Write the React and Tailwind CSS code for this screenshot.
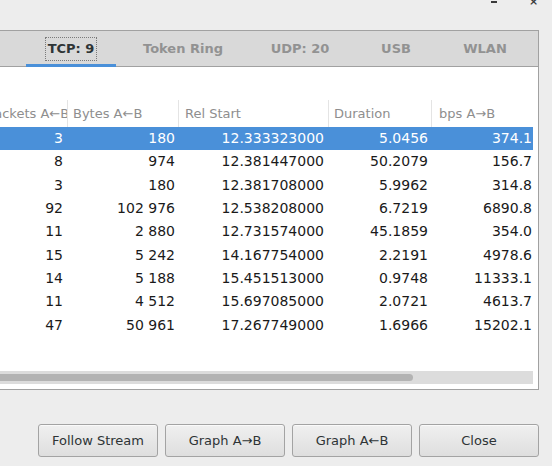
import React from "react";

const rows = [
  ["3", "180", "12.333323000", "5.0456", "374.1"],
  ["8", "974", "12.381447000", "50.2079", "156.7"],
  ["3", "180", "12.381708000", "5.9962", "314.8"],
  ["92", "102\u00a0976", "12.538208000", "6.7219", "6890.8"],
  ["11", "2\u00a0880", "12.731574000", "45.1859", "354.0"],
  ["15", "5\u00a0242", "14.167754000", "2.2191", "4978.6"],
  ["14", "5\u00a0188", "15.451513000", "0.9748", "11333.1"],
  ["11", "4\u00a0512", "15.697085000", "2.0721", "4613.7"],
  ["47", "50\u00a0961", "17.267749000", "1.6966", "15202.1"],
];

function Btn({ children }) {
  return (
    <button className="w-[120px] h-[33px] rounded-[3px] border border-[#a3a3a3] bg-gradient-to-b from-[#f0f0f0] to-[#dedede] text-[13px] text-[#2e3436] flex items-center justify-center pt-[1px] shadow-[inset_0_1px_0_#fafafa]">
      {children}
    </button>
  );
}

export default function App() {
  return (
    <div className="w-[552px] h-[466px] bg-[#ededed] overflow-hidden font-['DejaVu_Sans',sans-serif] relative">
      {/* top strip */}
      <div className="h-[30px] relative bg-[#ededed]">
        <div className="absolute left-[491px] top-[1px] w-[6px] h-[2px] bg-[#3a3a3a]" />
        <div className="absolute left-[529px] top-[-4px] text-[11px] leading-none font-bold text-[#3a3a3a]">×</div>
      </div>
      <div className="flex">
        <div className="w-[539px] flex flex-col">
          {/* tab bar */}
          <div className="h-[37px] border-t border-b border-r border-[#a1a1a1] bg-[#d9d9d9] flex pl-[26px] relative">
            <div className="w-[90px] flex items-center justify-center relative">
              <span className="border border-dotted border-[#7a7a7a] px-[2px] py-[3px] text-[13px] font-bold text-[#2e3436] leading-[16px]">TCP: 9</span>
              <div className="absolute left-0 right-0 bottom-[-1px] h-[3px] bg-[#4a90d9]" />
            </div>
            <div className="w-[134px] flex items-center justify-center text-[13px] font-bold text-[#929292]">Token Ring</div>
            <div className="w-[100px] flex items-center justify-center text-[13px] font-bold text-[#929292]">UDP: 20</div>
            <div className="w-[92px] flex items-center justify-center text-[13px] font-bold text-[#929292]">USB</div>
            <div className="w-[86px] flex items-center justify-center text-[13px] font-bold text-[#929292]">WLAN</div>
          </div>
          {/* content */}
          <div className="h-[323px] bg-white border-r border-b border-[#a1a1a1] flex flex-col pt-[33px]">
            <div className="w-[533px]">
              <div className="flex h-[27px] text-[13px] text-[#8e8e8e]">
                <div className="w-[67px] overflow-hidden whitespace-nowrap flex items-center">
                  <span className="ml-[-13px]">Packets A←B</span>
                </div>
                <div className="w-[111px] border-l border-[#e4e4e4] pl-[5px] flex items-center whitespace-nowrap">Bytes A←B</div>
                <div className="w-[150px] border-l border-[#e4e4e4] pl-[6px] flex items-center whitespace-nowrap">Rel Start</div>
                <div className="w-[103px] border-l border-[#e4e4e4] pl-[5px] flex items-center whitespace-nowrap">Duration</div>
                <div className="w-[102px] border-l border-[#e4e4e4] pl-[7px] flex items-center whitespace-nowrap">bps A→B</div>
              </div>
              {rows.map((r, i) => (
                <div
                  key={i}
                  className={
                    "flex h-[23.3px] items-center text-[14px] whitespace-nowrap " +
                    (i === 0 ? "bg-[#4a90d9] text-white" : "text-[#1a1a1a]")
                  }
                >
                  <div className="w-[67px] text-right pr-[4px]">{r[0]}</div>
                  <div className="w-[111px] text-right pr-[3px]">{r[1]}</div>
                  <div className="w-[150px] text-right pr-[4px]">{r[2]}</div>
                  <div className="w-[103px] text-right pr-[3px]">{r[3]}</div>
                  <div className="w-[102px] text-right pr-[1px]">{r[4]}</div>
                </div>
              ))}
            </div>
            <div className="mt-auto mb-[5px] w-[533px] h-[13px] bg-[#dcdcdc] flex items-center">
              <div className="w-[413px] h-[7px] rounded-r-full bg-[#b3b3b3]" />
            </div>
          </div>
        </div>
      </div>
      {/* buttons */}
      <div className="flex justify-end gap-[7px] pr-[13px] pt-[34px]">
        <Btn>Follow Stream</Btn>
        <Btn>Graph A→B</Btn>
        <Btn>Graph A←B</Btn>
        <Btn>Close</Btn>
      </div>
    </div>
  );
}
